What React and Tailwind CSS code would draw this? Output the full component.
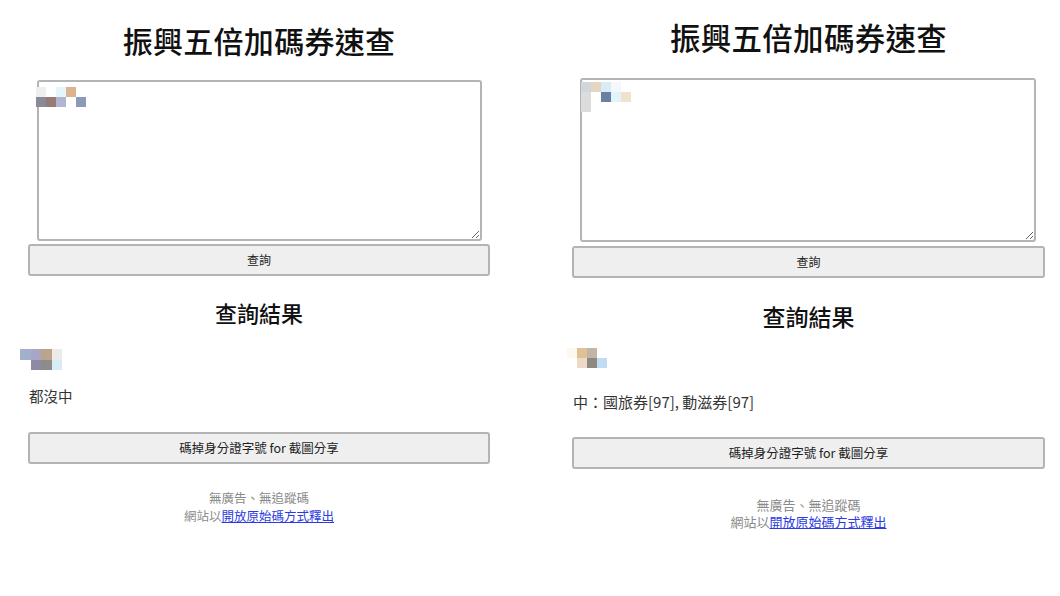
import React from 'react';

const FONT = '"Noto Sans CJK TC", "Noto Sans", sans-serif';

// Redacted text is shown as coarse colour blocks (null = empty cell)
const Mosaic = ({ rows, cell = 10, className = '' }) => (
    <div className={`flex flex-col ${className}`}>
        {rows.map((row, r) => (
            <div key={r} className="flex">
                {row.map((c, i) => (
                    <div
                        key={i}
                        style={{ width: cell, height: cell, background: c || 'transparent' }}
                    />
                ))}
            </div>
        ))}
    </div>
);

const Footer = ({ size, className = '' }) => (
    <div className={`text-center text-[#8a8a8a] ${size} ${className}`}>
        <p>無廣告、無追蹤碼</p>
        <p>
            網站以
            <a href="#" className="text-[#2b3be0] underline">開放原始碼方式釋出</a>
        </p>
    </div>
);

const GrayButton = ({ children, className = '' }) => (
    <button
        type="button"
        className={`w-full h-8 bg-[#efefef] border-2 border-[#b4b4b4] rounded-[3px] text-[#222] ${className}`}
    >
        {children}
    </button>
);

const QueryBox = ({ height, inset, mosaic, mosaicPos }) => (
    <div className={`relative ${inset}`}>
        <textarea
            readOnly
            className={`block w-full ${height} bg-white border-2 border-[#b4b4b4] rounded-[3px] outline-none`}
        />
        <div className={`absolute ${mosaicPos}`}>
            <Mosaic rows={mosaic} />
        </div>
    </div>
);

export default function App() {
    return (
        <div className="flex w-[1060px] h-[596px] bg-white overflow-hidden" style={{ fontFamily: FONT }}>
            {/* first result: nothing won */}
            <div className="w-[519px] pl-[28px] pr-[29px] pt-[22px] flex flex-col">
                <h1 className="text-center text-[30px] leading-[36px] font-medium text-[#111] tracking-[0.3px]">振興五倍加碼券速查</h1>
                <QueryBox
                    height="h-[161px]"
                    inset="mt-[22px] ml-[9px] mr-[8px]"
                    mosaicPos="left-[-1px] top-[7px]"
                    mosaic={[
                        ['#eef0f0', null, '#e3f6fc', '#dcb391'],
                        ['#898a96', '#977a75', '#b0b5d1', null, '#8c9ab8'],
                    ]}
                />
                <GrayButton className="mt-[3px] text-[12px]">查詢</GrayButton>
                <h2 className="mt-[22px] text-center text-[22px] leading-[28px] font-medium text-[#111]">查詢結果</h2>
                <Mosaic
                    className="mt-[23px] ml-[-8px]"
                    cell={10.5}
                    rows={[
                        ['#a3b0cc', '#a8a6c4', '#bba58a', '#ebebeb'],
                        [null, '#8d8aa6', '#8f8b8b', '#d8ecf6'],
                    ]}
                />
                <p className="mt-[16px] ml-px text-[14.5px] leading-[20px] text-[#333]">都沒中</p>
                <GrayButton className="mt-[26px] text-[12.5px]">碼掉身分證字號 for 截圖分享</GrayButton>
                <Footer size="mt-[25px] text-[12.5px] leading-[18px]" />
            </div>

            {/* second result: two coupons won */}
            <div className="w-[541px] pl-[53px] pr-[15px] pt-[19px] flex flex-col">
                <h1 className="text-center text-[30.5px] leading-[36px] font-medium text-[#111] tracking-[0.3px]">振興五倍加碼券速查</h1>
                <QueryBox
                    height="h-[164px]"
                    inset="mt-[23px] ml-[8px] mr-[9px]"
                    mosaicPos="left-px top-[4px]"
                    mosaic={[
                        ['#cfd6dc', '#e6d5c0', '#d8ecf8', '#f6f7f8'],
                        ['#dcdcdc', null, '#6c7f9e', '#e2f4fb', '#f1e1cf'],
                        ['#dcdcdc'],
                    ]}
                />
                <GrayButton className="mt-[4px] text-[12px]">查詢</GrayButton>
                <h2 className="mt-[24px] text-center text-[23px] leading-[28px] font-medium text-[#111]">查詢結果</h2>
                <Mosaic
                    className="mt-[18px] ml-[-5px]"
                    rows={[
                        ['#fdf8ef', '#e0c096', '#c3b4a8'],
                        [null, '#ecdac6', '#8f8880', '#c0dcf2'],
                    ]}
                />
                <p className="mt-[24px] ml-px text-[15px] leading-[20px] text-[#333]">中：國旅券[97], 動滋券[97]</p>
                <GrayButton className="mt-[25px] text-[12.5px]">碼掉身分證字號 for 截圖分享</GrayButton>
                <Footer size="mt-[27px] text-[13px] leading-[17px]" />
            </div>
        </div>
    );
}
